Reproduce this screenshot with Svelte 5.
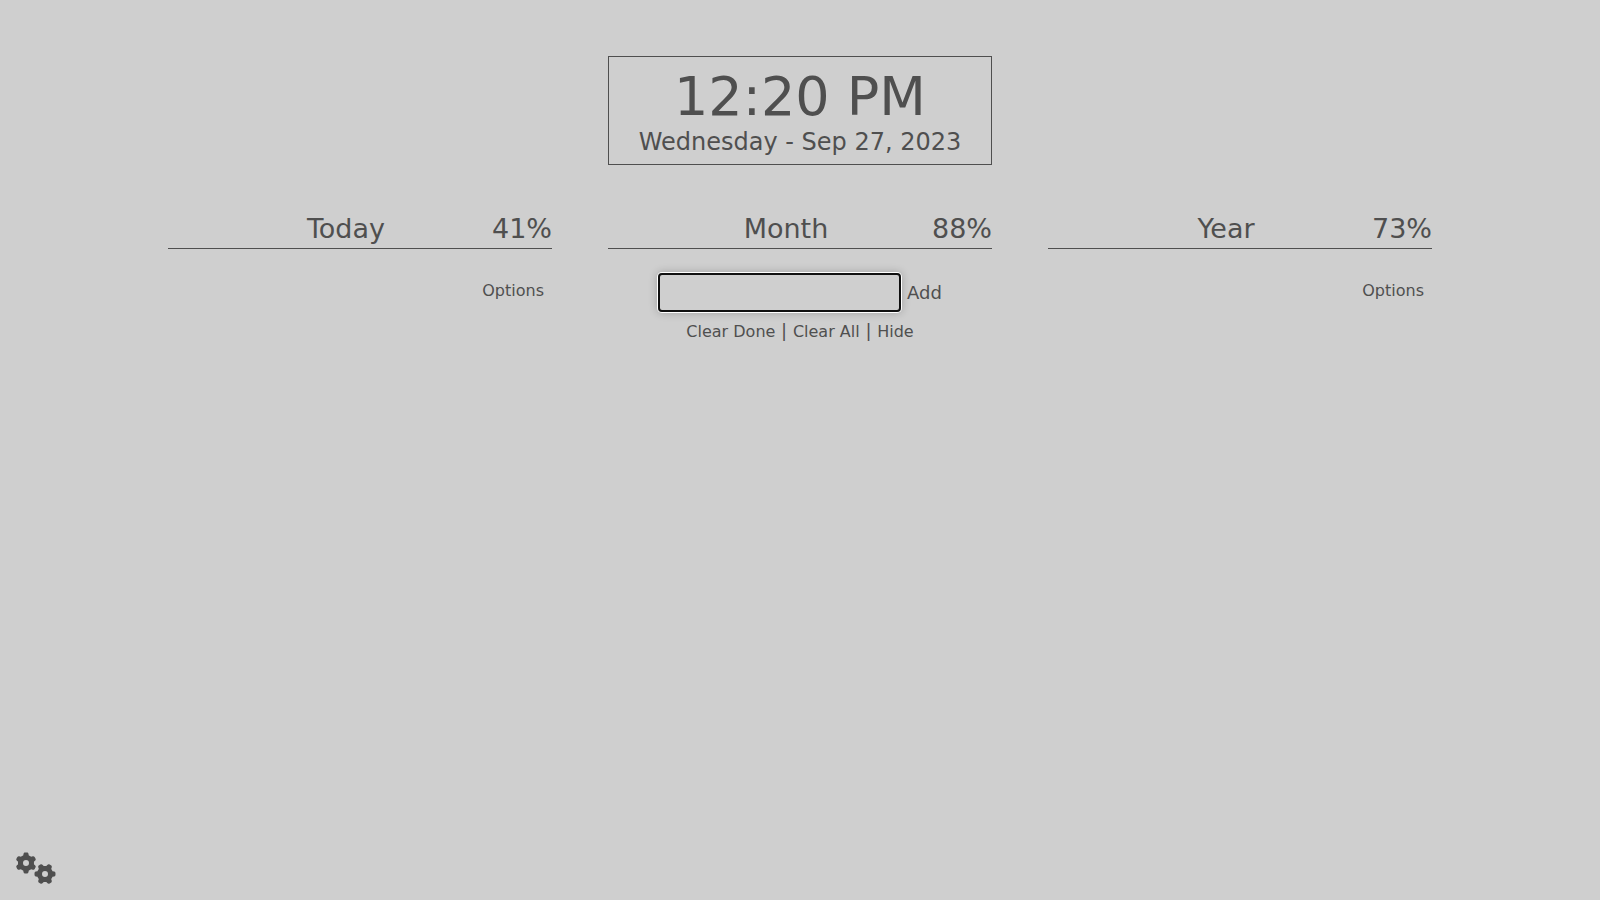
<script>
  const date = 'Wednesday - Sep 27, 2023';
  const time = '12:20 PM';
  let item = $state('');
</script>

<main>
  <section class="clock">
    <div class="time">{time}</div>
    <div class="date">{date}</div>
  </section>

  <div class="columns">
    <section>
      <header><h2>Today</h2><span>41%</span></header>
      <div class="options"><button class="small">Options</button></div>
    </section>

    <section>
      <header><h2>Month</h2><span>88%</span></header>
      <form onsubmit={(e) => e.preventDefault()}>
        <input type="text" aria-label="New item" bind:value={item} />
        <button type="submit">Add</button>
      </form>
      <div class="actions">
        <button class="small">Clear Done</button> | <button class="small">Clear All</button> | <button class="small">Hide</button>
      </div>
    </section>

    <section>
      <header><h2>Year</h2><span>73%</span></header>
      <div class="options"><button class="small">Options</button></div>
    </section>
  </div>

  <button class="settings" aria-label="Settings">
    <svg viewBox="0 0 640 512" aria-hidden="true"><path d="M308.5 135.3c7.1-6.3 9.9-16.2 6.2-25c-2.3-5.3-4.8-10.5-7.6-15.5L304 89.4c-3-5-6.3-9.9-9.8-14.6c-5.7-7.6-15.7-10.1-24.7-7.1l-28.2 9.3c-10.7-8.8-23-16-36.2-20.9L199 27.1c-1.9-9.3-9.1-16.7-18.5-17.8C173.9 8.4 167.2 8 160.4 8h-.7c-6.8 0-13.5 .4-20.1 1.2c-9.4 1.1-16.6 8.6-18.5 17.8L115 56.1c-13.3 5-25.5 12.1-36.2 20.9L50.5 67.8c-9-3-19-.5-24.7 7.1c-3.5 4.7-6.8 9.6-9.9 14.6l-3 5.3c-2.8 5-5.3 10.2-7.6 15.6c-3.7 8.7-.9 18.6 6.2 25l22.2 19.8C32.6 161.9 32 168.9 32 176s.6 14.1 1.7 20.9L11.5 216.7c-7.1 6.3-9.9 16.2-6.2 25c2.3 5.3 4.8 10.5 7.6 15.6l3 5.2c3 5.1 6.3 9.9 9.9 14.6c5.7 7.6 15.7 10.1 24.7 7.1l28.2-9.3c10.7 8.8 23 16 36.2 20.9l6.1 29.1c1.9 9.3 9.1 16.7 18.5 17.8c6.7 .8 13.5 1.2 20.4 1.2s13.7-.4 20.4-1.2c9.4-1.1 16.6-8.6 18.5-17.8l6.1-29.1c13.3-5 25.5-12.1 36.2-20.9l28.2 9.3c9 3 19 .5 24.7-7.1c3.5-4.7 6.8-9.5 9.8-14.6l3.1-5.4c2.8-5 5.3-10.2 7.6-15.5c3.7-8.7 .9-18.6-6.2-25l-22.2-19.8c1.1-6.8 1.7-13.8 1.7-20.9s-.6-14.1-1.7-20.9l22.2-19.8zM112 176a48 48 0 1 1 96 0 48 48 0 1 1 -96 0zM504.7 500.5c6.3 7.1 16.2 9.9 25 6.2c5.3-2.3 10.5-4.8 15.5-7.6l5.4-3.1c5-3 9.9-6.3 14.6-9.8c7.6-5.7 10.1-15.7 7.1-24.7l-9.3-28.2c8.8-10.7 16-23 20.9-36.2l29.1-6.1c9.3-1.9 16.7-9.1 17.8-18.5c.8-6.7 1.2-13.5 1.2-20.4s-.4-13.7-1.2-20.4c-1.1-9.4-8.6-16.6-17.8-18.5L583.9 307c-5-13.3-12.1-25.5-20.9-36.2l9.3-28.2c3-9 .5-19-7.1-24.7c-4.7-3.5-9.6-6.8-14.6-9.9l-5.3-3c-5-2.8-10.2-5.3-15.6-7.6c-8.7-3.7-18.6-.9-25 6.2l-19.8 22.2c-6.8-1.1-13.8-1.7-20.9-1.7s-14.1 .6-20.9 1.7l-19.8-22.2c-6.3-7.1-16.2-9.9-25-6.2c-5.3 2.3-10.5 4.8-15.6 7.6l-5.2 3c-5.1 3-9.9 6.3-14.6 9.9c-7.6 5.7-10.1 15.7-7.1 24.7l9.3 28.2c-8.8 10.7-16 23-20.9 36.2L315.1 313c-9.3 1.9-16.7 9.1-17.8 18.5c-.8 6.7-1.2 13.5-1.2 20.4s.4 13.7 1.2 20.4c1.1 9.4 8.6 16.6 17.8 18.5l29.1 6.1c5 13.3 12.1 25.5 20.9 36.2l-9.3 28.2c-3 9-.5 19 7.1 24.7c4.7 3.5 9.5 6.8 14.6 9.8l5.4 3.1c5 2.8 10.2 5.3 15.5 7.6c8.7 3.7 18.6 .9 25-6.2l19.8-22.2c6.8 1.1 13.8 1.7 20.9 1.7s14.1-.6 20.9-1.7l19.8 22.2zM464 304a48 48 0 1 1 0 96 48 48 0 1 1 0-96z" /></svg>
  </button>
</main>

<style>
  :global(body) {
    background: #cfcfcf;
  }

  main {
    box-sizing: border-box;
    display: flex;
    flex-direction: column;
    align-items: center;
    gap: 48px;
    min-height: 100vh;
    padding: 56px 0 16px;
    color: #4f4f4f;
    font: 18px 'DejaVu Sans', sans-serif;
  }

  .clock {
    box-sizing: border-box;
    width: 24%;
    min-width: 350px;
    padding: 8px 0;
    border: 1px solid #4f4f4f;
    text-align: center;
  }

  .time {
    font-size: 54px;
    line-height: 63px;
  }

  .date {
    font-size: 24px;
    line-height: 28px;
  }

  .columns {
    display: grid;
    grid-template-columns: repeat(3, 1fr);
    gap: 56px;
    width: 79%;
  }

  header {
    display: flex;
    padding: 0 0 3px 32px;
    border-bottom: 1px solid #4f4f4f;
    font-size: 27px;
    line-height: 32px;
  }

  h2 {
    flex: 1;
    margin: 0;
    font: inherit;
    text-align: center;
  }

  button {
    padding: 0;
    border: 0;
    background: none;
    color: inherit;
    font: inherit;
    cursor: pointer;
  }

  .small {
    font-size: 16px;
  }

  .options {
    padding: 30px 8px 0;
    text-align: right;
  }

  form {
    display: flex;
    justify-content: center;
    align-items: center;
    gap: 6px;
    margin-top: 24px;
  }

  input {
    box-sizing: border-box;
    width: 243px;
    min-width: 0;
    height: 39px;
    padding: 0 8px;
    border: 2px solid #101010;
    border-radius: 4px;
    outline: none;
    background: transparent;
    box-shadow: 0 0 0 1px #fff, 0 0 8px 1px rgba(0, 0, 0, 0.22);
    color: inherit;
    font: inherit;
  }

  .actions {
    margin-top: 8px;
    line-height: 22px;
    text-align: center;
  }

  .settings {
    align-self: flex-start;
    margin: auto 0 0 16px;
  }

  svg {
    display: block;
    width: 40px;
    height: 32px;
    fill: currentColor;
  }
</style>
